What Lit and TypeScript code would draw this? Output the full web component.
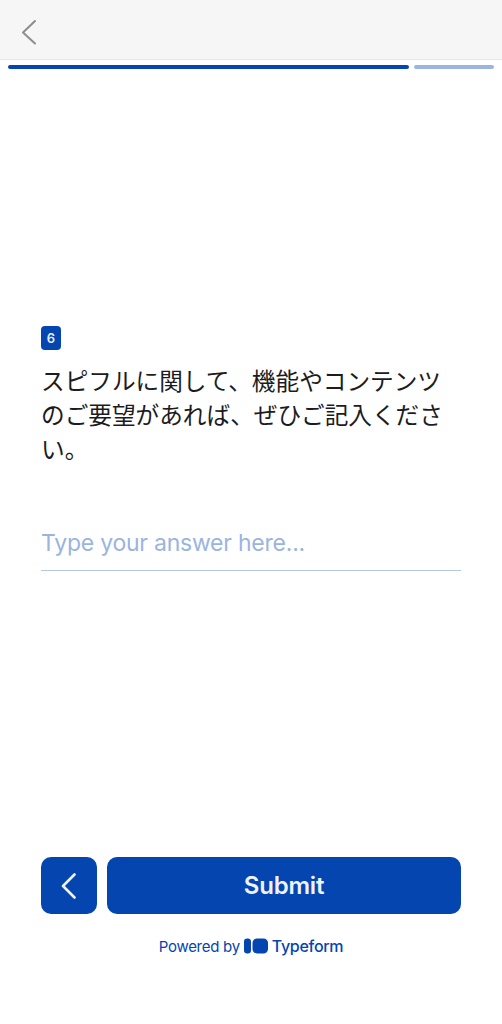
import { LitElement, html, css } from "lit";
import { customElement } from "lit/decorators.js";

@customElement("app-root")
export class AppRoot extends LitElement {
  static styles = css`
    :host {
      display: block;
      width: 502px;
      height: 1024px;
      background: #fff;
      font-family: Inter, "Noto Sans CJK JP", sans-serif;
      overflow: hidden;
    }
    .page { display: flex; flex-direction: column; height: 1024px; }
    .top {
      height: 60px;
      flex: none;
      box-sizing: border-box;
      background: #f6f6f6;
      border-bottom: 1px solid #e6e6e6;
      display: flex;
      align-items: center;
      padding-left: 21px;
    }
    .top svg { display: block; margin-top: 4px; }
    .progress {
      display: flex;
      gap: 5px;
      padding: 5px 8px 0 8px;
      flex: none;
    }
    .seg { height: 4px; border-radius: 2px; }
    .done { width: 401px; background: #0445af; }
    .rest { width: 80px; background: #9bb5e0; }
    .body {
      flex: none;
      padding: 257px 41px 0 41px;
      height: 520px;
      box-sizing: border-box;
    }
    .badge {
      width: 20px;
      height: 24px;
      border-radius: 4px;
      background: #0445af;
      color: #e6ecf7;
      font-size: 13px;
      font-weight: 600;
      display: flex;
      align-items: center;
      justify-content: center;
    }
    .q {
      margin: 13px 0 0 0;
      font-family: "Noto Sans CJK JP", sans-serif;
      font-size: 23.65px;
      line-height: 34px;
      font-weight: 400;
      color: #1c1c1e;
      width: 410px;
    }
    .input {
      margin-top: 63px;
      height: 43px;
      border-bottom: 1px solid #b5c8e8;
      font-size: 23px;
      line-height: 30px;
      color: #9bb4df;
      letter-spacing: -0.23px;
      box-sizing: border-box;
      width: 420px;
    }
    .actions {
      margin-top: 268px;
      padding: 0 41px;
      display: flex;
      gap: 10px;
      flex: none;
    }
    .btn {
      height: 57px;
      border-radius: 10px;
      background: #0445af;
      color: #eef2fa;
      display: flex;
      align-items: center;
      justify-content: center;
      border: 0;
      padding: 0;
      font-family: inherit;
    }
    .back { width: 56px; flex: none; }
    .submit { width: 354px; font-size: 24px; font-weight: 600; letter-spacing: -0.2px; }
    .brand {
      margin-top: 22px;
      display: flex;
      align-items: center;
      justify-content: center;
      gap: 4px;
      color: #0445af;
      font-size: 15px;
      letter-spacing: -0.28px;
    }
    .name { font-size: 16px; font-weight: 500; letter-spacing: -0.3px; }
  `;

  render() {
    return html`
      <div class="page">
        <div class="top">
          <svg width="16" height="26" viewBox="0 0 16 26" fill="none">
            <path d="M14 2 L2 13.5 L14 24.5" stroke="#8d8d8d" stroke-width="2" stroke-linecap="round" stroke-linejoin="round"/>
          </svg>
        </div>
        <div class="progress">
          <div class="seg done"></div>
          <div class="seg rest"></div>
        </div>
        <div class="body">
          <div class="badge">6</div>
          <p class="q">スピフルに関して、機能やコンテンツのご要望があれば、ぜひご記入ください。</p>
          <div class="input">Type your answer here...</div>
        </div>
        <div class="actions">
          <button class="btn back">
            <svg width="16" height="26" viewBox="0 0 16 26" fill="none">
              <path d="M13.5 1.5 L2 13 L13.5 24.5" stroke="#eef2fa" stroke-width="2.6" stroke-linecap="round" stroke-linejoin="round"/>
            </svg>
          </button>
          <button class="btn submit">Submit</button>
        </div>
        <div class="brand">
          <span>Powered by</span>
          <svg width="24" height="16" viewBox="0 0 24 16">
            <rect x="0" y="0.5" width="7" height="15" rx="3.2" fill="#0445af"/>
            <rect x="8.5" y="0.5" width="15.5" height="15" rx="4.5" fill="#0445af"/>
          </svg>
          <span class="name">Typeform</span>
        </div>
      </div>
    `;
  }
}
